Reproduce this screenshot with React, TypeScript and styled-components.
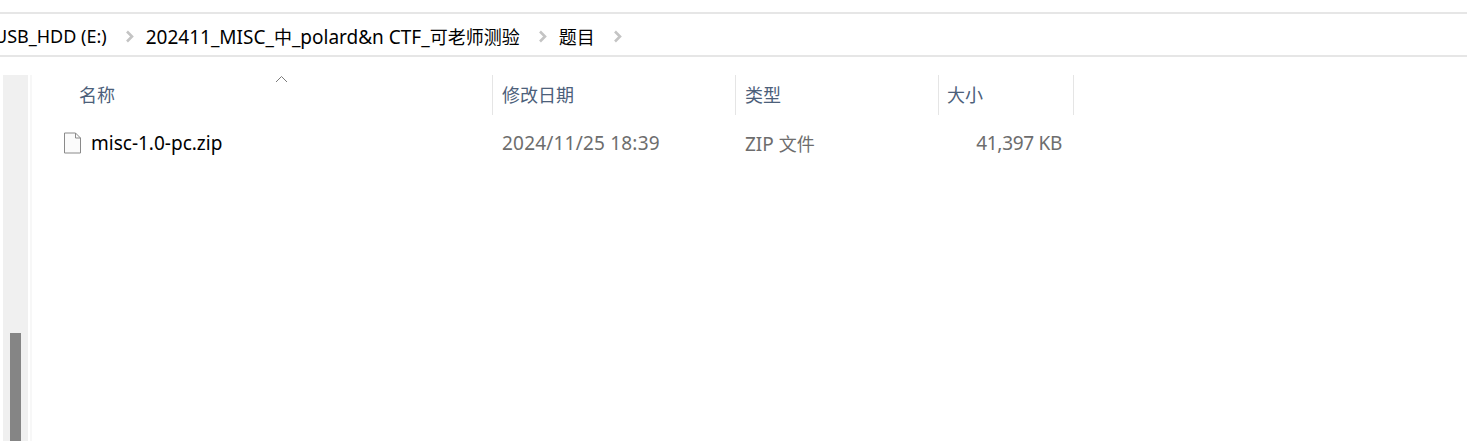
import React from "react";
import styled, { createGlobalStyle } from "styled-components";

const GlobalStyle = createGlobalStyle`
  html, body {
    margin: 0;
    padding: 0;
    background: #fff;
    overflow: hidden;
  }
  body {
    font-family: "Noto Sans", "Noto Sans CJK SC", sans-serif;
  }
`;

const Window = styled.div`
  width: 1467px;
  height: 441px;
  display: flex;
  flex-direction: column;
  overflow: hidden;
  padding-top: 12px;
  box-sizing: border-box;
`;

const AddressBar = styled.div`
  height: 45px;
  box-sizing: border-box;
  padding-top: 3px;
  border-top: 2px solid #e6e6e6;
  border-bottom: 2px solid #e6e6e6;
  display: flex;
  align-items: center;
  overflow: hidden;
  flex-shrink: 0;
`;

const Crumb = styled.span<{ $offset?: number; $size?: number }>`
  font-size: ${(p) => p.$size ?? 19}px;
  color: #000;
  white-space: nowrap;
  margin-left: ${(p) => p.$offset ?? 0}px;
`;

// latin runs are a bit larger than the han ones in the original
const Han = styled.span`
  font-size: 18px;
`;

const Chevron = styled.svg`
  width: 9px;
  height: 13px;
  margin: 0 12px 0 18px;
  flex-shrink: 0;
`;

const Body = styled.div`
  flex: 1;
  display: flex;
  padding-top: 18px;
  min-height: 0;
`;

const Track = styled.div`
  width: 25px;
  margin-left: 3px;
  background: #f0f0f0;
  display: flex;
  flex-direction: column;
  justify-content: flex-end;
  align-items: center;
  flex-shrink: 0;
`;

const Thumb = styled.div`
  width: 11px;
  height: 108px;
  background: #858585;
`;

const Gutter = styled.div`
  width: 2px;
  margin-left: 2px;
  background: #f7f7f7;
  flex-shrink: 0;
`;

const Listing = styled.div`
  flex: 1;
  display: flex;
  flex-direction: column;
`;

const HeaderRow = styled.div`
  display: flex;
  height: 40px;
`;

const HeaderCell = styled.div<{ $width: number; $pad: number }>`
  position: relative;
  width: ${(p) => p.$width}px;
  box-sizing: border-box;
  padding-left: ${(p) => p.$pad}px;
  padding-bottom: 2px;
  border-right: 1px solid #e5e5e5;
  font-size: 18px;
  color: #4c607a;
  display: flex;
  align-items: center;
`;

const SortCaret = styled.svg`
  position: absolute;
  left: 243px;
  top: 0;
  width: 13px;
  height: 8px;
`;

const FileRow = styled.div`
  display: flex;
  align-items: center;
  height: 56px;
  font-size: 19px;
  color: #6d6d6d;
`;

const NameCell = styled.div`
  width: 461px;
  display: flex;
  align-items: center;
  gap: 9px;
  padding-left: 31px;
  box-sizing: border-box;
  color: #000;
`;

const FileIcon = styled.svg`
  width: 19px;
  height: 22px;
  flex-shrink: 0;
`;

const DataCell = styled.div<{ $width: number; $pad?: number; $right?: boolean; $spacing?: number }>`
  width: ${(p) => p.$width}px;
  box-sizing: border-box;
  padding-left: ${(p) => p.$pad ?? 0}px;
  text-align: ${(p) => (p.$right ? "right" : "left")};
  letter-spacing: ${(p) => p.$spacing ?? 0}px;
  white-space: nowrap;
`;

const Arrow = () => (
  <Chevron viewBox="0 0 9 13">
    <path d="M2 1.5 L7 6.5 L2 11.5" fill="none" stroke="#c4c4c4" strokeWidth="2.6" />
  </Chevron>
);

export default function App() {
  return (
    <>
      <GlobalStyle />
      <Window>
        <AddressBar>
          <Crumb $offset={-6} $size={18}>USB_HDD (E:)</Crumb>
          <Arrow />
          <Crumb>
            202411_MISC_<Han>中</Han>_polard&amp;n CTF_<Han>可老师测验</Han>
          </Crumb>
          <Arrow />
          <Crumb>
            <Han>题目</Han>
          </Crumb>
          <Arrow />
        </AddressBar>
        <Body>
          <Track>
            <Thumb />
          </Track>
          <Gutter />
          <Listing>
            <HeaderRow>
              <HeaderCell $width={461} $pad={47}>
                名称
                <SortCaret viewBox="0 0 13 8">
                  <path d="M1 7 L6.5 1.5 L12 7" fill="none" stroke="#7a7a7a" strokeWidth="1" />
                </SortCaret>
              </HeaderCell>
              <HeaderCell $width={243} $pad={9}>修改日期</HeaderCell>
              <HeaderCell $width={203} $pad={9}>类型</HeaderCell>
              <HeaderCell $width={135} $pad={8}>大小</HeaderCell>
            </HeaderRow>
            <FileRow>
              <NameCell>
                <FileIcon viewBox="0 0 19 22">
                  <path
                    d="M1.5 1 H12.5 L17.5 6 V21 H1.5 Z"
                    fill="#fbfbfb"
                    stroke="#8a8a8a"
                    strokeWidth="1"
                  />
                  <path d="M12.5 1 V6 H17.5" fill="none" stroke="#8a8a8a" strokeWidth="1" />
                </FileIcon>
                misc-1.0-pc.zip
              </NameCell>
              <DataCell $width={243} $pad={9} $spacing={0.2}>2024/11/25 18:39</DataCell>
              <DataCell $width={203} $pad={9}>
                ZIP <Han>文件</Han>
              </DataCell>
              <DataCell $width={123} $right $spacing={-0.3}>41,397 KB</DataCell>
            </FileRow>
          </Listing>
        </Body>
      </Window>
    </>
  );
}
